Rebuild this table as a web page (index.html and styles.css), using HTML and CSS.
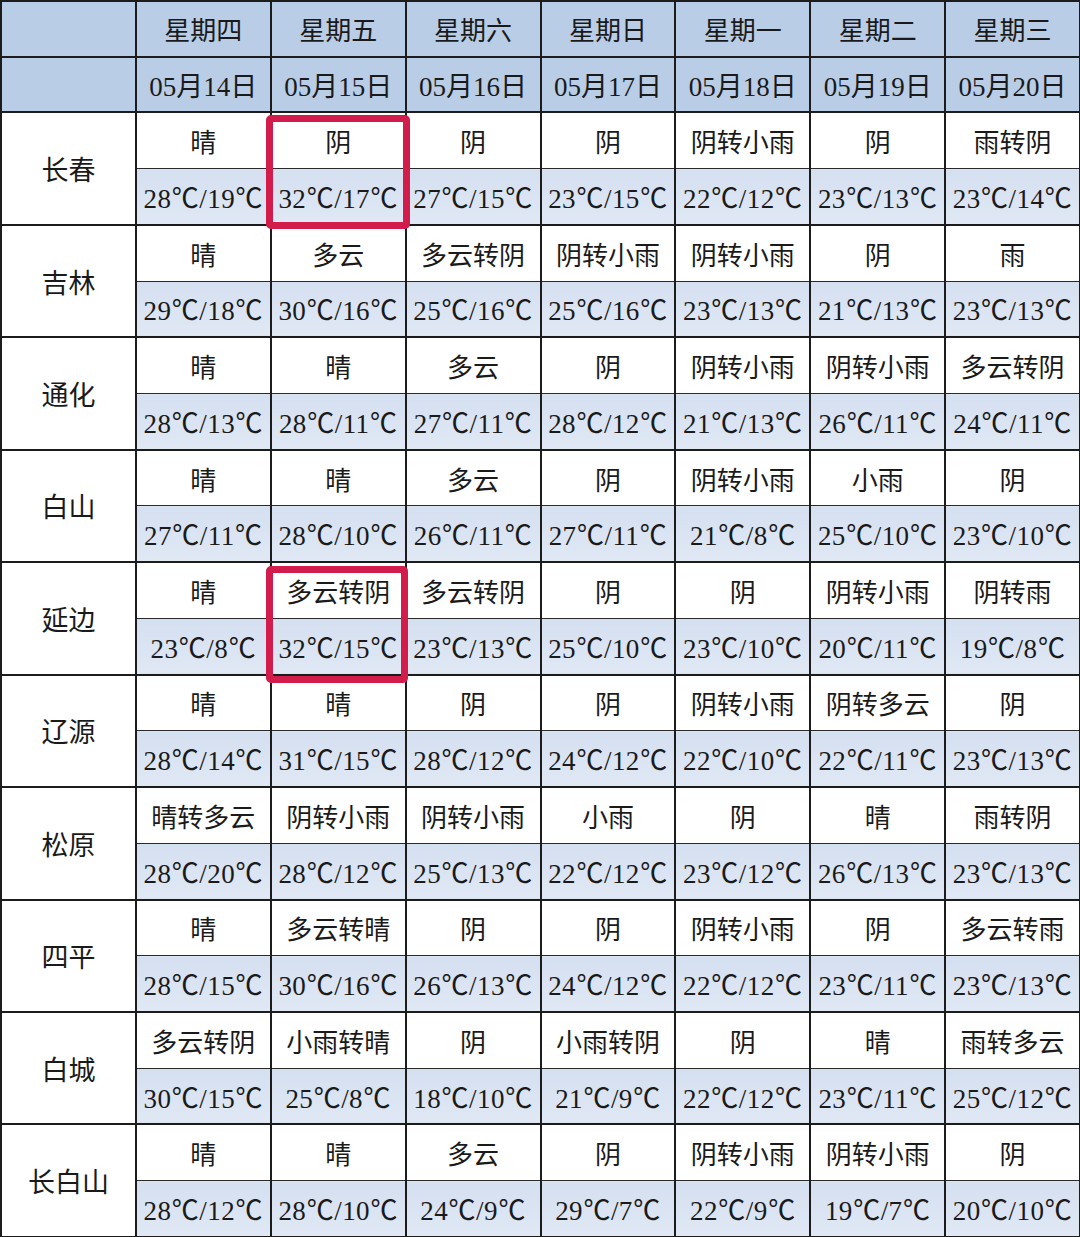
FILE: index.html
```html
<!DOCTYPE html>
<html lang="zh">
<head>
<meta charset="utf-8">
<link rel="stylesheet" href="styles.css">
</head>
<body>
<div class="wrap">
<table class="wx">
  <colgroup><col class="c0"><col><col><col><col><col><col><col></colgroup>
  <tr class="hd"><td></td><td>星期四</td><td>星期五</td><td>星期六</td><td>星期日</td><td>星期一</td><td>星期二</td><td>星期三</td></tr>
  <tr class="hd"><td></td><td>05月14日</td><td>05月15日</td><td>05月16日</td><td>05月17日</td><td>05月18日</td><td>05月19日</td><td>05月20日</td></tr>

  <tr class="w"><td class="city" rowspan="2">长春</td><td>晴</td><td>阴</td><td>阴</td><td>阴</td><td>阴转小雨</td><td>阴</td><td>雨转阴</td></tr>
  <tr class="t"><td>28<span class="u">℃</span>/19<span class="u">℃</span></td><td>32<span class="u">℃</span>/17<span class="u">℃</span></td><td>27<span class="u">℃</span>/15<span class="u">℃</span></td><td>23<span class="u">℃</span>/15<span class="u">℃</span></td><td>22<span class="u">℃</span>/12<span class="u">℃</span></td><td>23<span class="u">℃</span>/13<span class="u">℃</span></td><td>23<span class="u">℃</span>/14<span class="u">℃</span></td></tr>

  <tr class="w"><td class="city" rowspan="2">吉林</td><td>晴</td><td>多云</td><td>多云转阴</td><td>阴转小雨</td><td>阴转小雨</td><td>阴</td><td>雨</td></tr>
  <tr class="t"><td>29<span class="u">℃</span>/18<span class="u">℃</span></td><td>30<span class="u">℃</span>/16<span class="u">℃</span></td><td>25<span class="u">℃</span>/16<span class="u">℃</span></td><td>25<span class="u">℃</span>/16<span class="u">℃</span></td><td>23<span class="u">℃</span>/13<span class="u">℃</span></td><td>21<span class="u">℃</span>/13<span class="u">℃</span></td><td>23<span class="u">℃</span>/13<span class="u">℃</span></td></tr>

  <tr class="w"><td class="city" rowspan="2">通化</td><td>晴</td><td>晴</td><td>多云</td><td>阴</td><td>阴转小雨</td><td>阴转小雨</td><td>多云转阴</td></tr>
  <tr class="t"><td>28<span class="u">℃</span>/13<span class="u">℃</span></td><td>28<span class="u">℃</span>/11<span class="u">℃</span></td><td>27<span class="u">℃</span>/11<span class="u">℃</span></td><td>28<span class="u">℃</span>/12<span class="u">℃</span></td><td>21<span class="u">℃</span>/13<span class="u">℃</span></td><td>26<span class="u">℃</span>/11<span class="u">℃</span></td><td>24<span class="u">℃</span>/11<span class="u">℃</span></td></tr>

  <tr class="w"><td class="city" rowspan="2">白山</td><td>晴</td><td>晴</td><td>多云</td><td>阴</td><td>阴转小雨</td><td>小雨</td><td>阴</td></tr>
  <tr class="t"><td>27<span class="u">℃</span>/11<span class="u">℃</span></td><td>28<span class="u">℃</span>/10<span class="u">℃</span></td><td>26<span class="u">℃</span>/11<span class="u">℃</span></td><td>27<span class="u">℃</span>/11<span class="u">℃</span></td><td>21<span class="u">℃</span>/8<span class="u">℃</span></td><td>25<span class="u">℃</span>/10<span class="u">℃</span></td><td>23<span class="u">℃</span>/10<span class="u">℃</span></td></tr>

  <tr class="w"><td class="city" rowspan="2">延边</td><td>晴</td><td>多云转阴</td><td>多云转阴</td><td>阴</td><td>阴</td><td>阴转小雨</td><td>阴转雨</td></tr>
  <tr class="t"><td>23<span class="u">℃</span>/8<span class="u">℃</span></td><td>32<span class="u">℃</span>/15<span class="u">℃</span></td><td>23<span class="u">℃</span>/13<span class="u">℃</span></td><td>25<span class="u">℃</span>/10<span class="u">℃</span></td><td>23<span class="u">℃</span>/10<span class="u">℃</span></td><td>20<span class="u">℃</span>/11<span class="u">℃</span></td><td>19<span class="u">℃</span>/8<span class="u">℃</span></td></tr>

  <tr class="w"><td class="city" rowspan="2">辽源</td><td>晴</td><td>晴</td><td>阴</td><td>阴</td><td>阴转小雨</td><td>阴转多云</td><td>阴</td></tr>
  <tr class="t"><td>28<span class="u">℃</span>/14<span class="u">℃</span></td><td>31<span class="u">℃</span>/15<span class="u">℃</span></td><td>28<span class="u">℃</span>/12<span class="u">℃</span></td><td>24<span class="u">℃</span>/12<span class="u">℃</span></td><td>22<span class="u">℃</span>/10<span class="u">℃</span></td><td>22<span class="u">℃</span>/11<span class="u">℃</span></td><td>23<span class="u">℃</span>/13<span class="u">℃</span></td></tr>

  <tr class="w"><td class="city" rowspan="2">松原</td><td>晴转多云</td><td>阴转小雨</td><td>阴转小雨</td><td>小雨</td><td>阴</td><td>晴</td><td>雨转阴</td></tr>
  <tr class="t"><td>28<span class="u">℃</span>/20<span class="u">℃</span></td><td>28<span class="u">℃</span>/12<span class="u">℃</span></td><td>25<span class="u">℃</span>/13<span class="u">℃</span></td><td>22<span class="u">℃</span>/12<span class="u">℃</span></td><td>23<span class="u">℃</span>/12<span class="u">℃</span></td><td>26<span class="u">℃</span>/13<span class="u">℃</span></td><td>23<span class="u">℃</span>/13<span class="u">℃</span></td></tr>

  <tr class="w"><td class="city" rowspan="2">四平</td><td>晴</td><td>多云转晴</td><td>阴</td><td>阴</td><td>阴转小雨</td><td>阴</td><td>多云转雨</td></tr>
  <tr class="t"><td>28<span class="u">℃</span>/15<span class="u">℃</span></td><td>30<span class="u">℃</span>/16<span class="u">℃</span></td><td>26<span class="u">℃</span>/13<span class="u">℃</span></td><td>24<span class="u">℃</span>/12<span class="u">℃</span></td><td>22<span class="u">℃</span>/12<span class="u">℃</span></td><td>23<span class="u">℃</span>/11<span class="u">℃</span></td><td>23<span class="u">℃</span>/13<span class="u">℃</span></td></tr>

  <tr class="w"><td class="city" rowspan="2">白城</td><td>多云转阴</td><td>小雨转晴</td><td>阴</td><td>小雨转阴</td><td>阴</td><td>晴</td><td>雨转多云</td></tr>
  <tr class="t"><td>30<span class="u">℃</span>/15<span class="u">℃</span></td><td>25<span class="u">℃</span>/8<span class="u">℃</span></td><td>18<span class="u">℃</span>/10<span class="u">℃</span></td><td>21<span class="u">℃</span>/9<span class="u">℃</span></td><td>22<span class="u">℃</span>/12<span class="u">℃</span></td><td>23<span class="u">℃</span>/11<span class="u">℃</span></td><td>25<span class="u">℃</span>/12<span class="u">℃</span></td></tr>

  <tr class="w"><td class="city" rowspan="2">长白山</td><td>晴</td><td>晴</td><td>多云</td><td>阴</td><td>阴转小雨</td><td>阴转小雨</td><td>阴</td></tr>
  <tr class="t"><td>28<span class="u">℃</span>/12<span class="u">℃</span></td><td>28<span class="u">℃</span>/10<span class="u">℃</span></td><td>24<span class="u">℃</span>/9<span class="u">℃</span></td><td>29<span class="u">℃</span>/7<span class="u">℃</span></td><td>22<span class="u">℃</span>/9<span class="u">℃</span></td><td>19<span class="u">℃</span>/7<span class="u">℃</span></td><td>20<span class="u">℃</span>/10<span class="u">℃</span></td></tr>
</table>
<div class="mark mark-a"></div>
<div class="mark mark-b"></div>
</div>
</body>
</html>
```

FILE: styles.css
```css
html, body {
  margin: 0;
  padding: 0;
  background: #ffffff;
}
.wrap {
  position: relative;
  width: 1080px;
  height: 1237px;
  overflow: hidden;
}
.wx {
  width: 1081px;
  height: 1238px;
  border-collapse: collapse;
  table-layout: fixed;
  font-family: "Liberation Serif", "Noto Sans CJK SC", serif;
  font-size: 26px;
  color: #1a1a1a;
}
.wx td {
  border: 2px solid #1c1c1c;
  text-align: center;
  vertical-align: middle;
  padding: 0;
  height: 54px;
  white-space: nowrap;
  overflow: hidden;
}
.wx .hd td {
  background: #b9cde6;
  height: 53px;
}
.wx .hd + .hd td {
  font-size: 27px;
}
.wx .city {
  background: #b9cde6;
  font-size: 27px;
}
.wx .w td {
  background: #ffffff;
  border-bottom: 1px solid #2a2a2a;
}
.wx .w td.city {
  border-bottom: 2px solid #1c1c1c;
}
.wx .t td {
  background: linear-gradient(#d4dff0, #e0e8f4);
  border-top: 1px solid #2a2a2a;
  font-size: 27px;
  letter-spacing: 0.4px;
}
.wx .u {
  display: inline-block;
  width: 28px;
  text-align: center;
  letter-spacing: 0;
}
.mark {
  position: absolute;
  border: 7px solid #d21d4c;
  border-radius: 5px;
  box-sizing: border-box;
}
.mark-a {
  left: 266px;
  top: 115px;
  width: 144px;
  height: 114px;
}
.mark-b {
  left: 266px;
  top: 566px;
  width: 142px;
  height: 117px;
}
```
